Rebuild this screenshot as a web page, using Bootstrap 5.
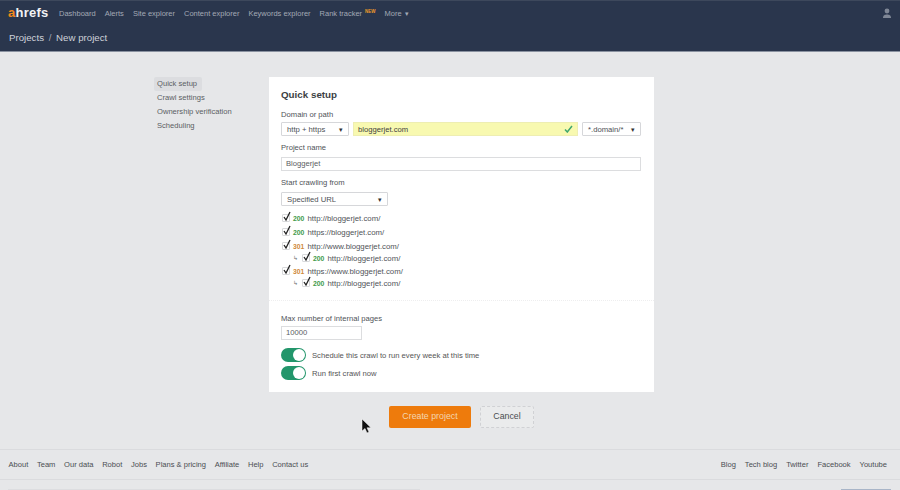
<!DOCTYPE html>
<html lang="en">
<head>
<meta charset="utf-8">
<title>New project</title>
<link rel="stylesheet" href="https://cdn.jsdelivr.net/npm/bootstrap@5.3.0/dist/css/bootstrap.min.css">
<style>
html,body{height:490px;overflow:hidden}
body{background:#e6e7e9;font-family:"Liberation Sans",Arial,sans-serif;font-size:7.65px;line-height:11px;color:#555}
.topbar{height:52px;background:#2a364d;border-top:1px solid #3d485c;border-bottom:1px solid #8a92a0;padding:0 8px 0 9px;color:#aab0bb}
.toprow{height:24px}
.brand{font-size:13px;font-weight:700;letter-spacing:.25px;color:#f2f3f5;width:51px;margin-left:-1px;line-height:22px}
.brand b{color:#f08a1d}
.toplink{color:#a3a9b5;font-size:7.5px;line-height:11px;margin-right:9px;text-decoration:none;white-space:nowrap}
.newtag{color:#ef9a2a;font-size:4.500px;font-weight:700;line-height:0;vertical-align:3px;margin-left:3px}
.caret6{font-size:7px;line-height:0;margin-left:1px}
.crumbs{font-size:9.700px;color:#ced2d9;line-height:14px;margin-top:6px}
.crumbs span{margin:0 2px;color:#a3a9b5}
.mainarea{height:397px;padding:25px 0 0 154px}
.sidemenu{width:115px}
.sideitem{display:block;width:max-content;padding:0 3px;height:14px;line-height:14px;color:#5b5e63;text-decoration:none;font-size:7.6px}
.sideitem.on{background:#dcdde0;border-radius:2px;padding-right:5px}
.panel{width:385px;height:315px;background:#fff;padding:11px 13px 0 12px}
.ptitle{font-size:9.800px;font-weight:700;color:#3c3f44;line-height:14px;margin:0 0 7px}
.lbl{font-size:7.65px;line-height:11px;color:#505358;margin-bottom:2px}
.lbl.wide{margin-bottom:4px}
.pick{height:14px;background:#fff;border:1px solid #d6d7da;border-radius:1px;padding:0 5px;font-size:7.7px;color:#4d5055;flex:none}
.pick i{font-style:normal;font-size:7px;color:#333}
.yellow{flex:1;height:14px;background:#f8f9b0;border:1px solid #eeeeb2;padding:0 4px;color:#3f4040;font-size:7.65px}
.yellow svg{width:9px;height:8px}
.txtfield{height:14px;border:1px solid #dcdddf;padding:0 4px;color:#5a5d62;font-size:7.65px;line-height:12px}
.gap5{margin-bottom:6px}
.gap6{margin-bottom:6px}
.urlrow{height:12px;color:#505358;font-size:7.8px;white-space:nowrap;margin-bottom:2px}
.urlrow.snug0{margin-bottom:0}
.urlrow.snug1{margin-bottom:1px}
.tick{width:8px;height:8px;border:1px solid #d8d9db;border-radius:1px;position:relative;flex:none;margin:0 3px 0 1px}
.tick svg{position:absolute;left:-1px;top:-4px;width:10px;height:11px}
.code{font-size:6.8px;font-weight:700;margin-right:3.500px;width:11px}
.ok{color:#3f9a4b}.moved{color:#d08a3a}
.turn{width:8px;margin-left:12px;font-size:6px;color:#777}
.divide{border-top:1px dotted #eeeeef;margin:11px -13px 12px -12px}
.switchy{width:25px;height:14px;border-radius:7px;background:#23966b;position:relative;flex:none;margin:0 6px 0 0}
.switchy::after{content:"";position:absolute;right:1px;top:1px;width:12px;height:12px;border-radius:50%;background:#fff}
.fieldgap{margin-bottom:8px}
.btnrow{margin:14px 0 0 120px}
.makebtn{width:82px;height:22px;background:#ee7b0c;border:0;border-radius:2px;color:#f4d6b0;font-size:8.800px;padding:0;margin-right:9px}
.quitbtn{width:54px;height:22px;background:#eaebec;border:1px dashed #d0d1d4;border-radius:2px;color:#4b4e52;font-size:8.800px;padding:0}
.footbar{height:31px;border-top:1px solid #dadbde;border-bottom:1px solid #dadbde;padding:0 13px 0 8.500px}
.footbar a{color:#4a4d52;text-decoration:none;font-size:7.55px;margin-right:8.700px}
.footbar .rightlinks a{margin:0 0 0 9px}
.tailrow{height:10px;padding:9px 9px 0 8px}
.tailtext{width:412px;height:1px;background:#dcdde0}
.tailbar{width:50px;height:1px;background:#a8b5c8}
.cursor{position:absolute;left:361px;top:419px;width:10px;height:15px}
</style>
</head>
<body>
<header class="topbar">
  <div class="toprow d-flex align-items-center">
    <div class="brand"><b>a</b>hrefs</div>
    <a class="toplink" href="#">Dashboard</a>
    <a class="toplink" href="#">Alerts</a>
    <a class="toplink" href="#">Site explorer</a>
    <a class="toplink" href="#">Content explorer</a>
    <a class="toplink" href="#">Keywords explorer</a>
    <a class="toplink" href="#">Rank tracker<span class="newtag">NEW</span></a>
    <a class="toplink" href="#">More <span class="caret6">▾</span></a>
    <svg class="ms-auto" width="10" height="11" viewBox="0 0 10 11"><circle cx="5" cy="3" r="2.400" fill="#7f8796"/><path d="M1 10c0-3 2-3.500 4-3.500S9 7 9 10z" fill="#7f8796"/></svg>
  </div>
  <div class="crumbs">Projects<span> / </span>New project</div>
</header>
<main class="mainarea d-flex">
  <nav class="sidemenu">
    <a class="sideitem on" href="#">Quick setup</a>
    <a class="sideitem" href="#">Crawl settings</a>
    <a class="sideitem" href="#">Ownership verification</a>
    <a class="sideitem" href="#">Scheduling</a>
  </nav>
  <div>
    <section class="panel">
      <h1 class="ptitle">Quick setup</h1>
      <div class="lbl">Domain or path</div>
      <div class="d-flex align-items-center gap-1 gap5">
        <div class="pick d-flex align-items-center justify-content-between" style="width:68px">http + https <i>▾</i></div>
        <div class="yellow d-flex align-items-center justify-content-between">bloggerjet.com
          <svg viewBox="0 0 9 8"><path d="M1 4.500 3.300 7 8 1" fill="none" stroke="#3fa66d" stroke-width="1.500"/></svg></div>
        <div class="pick d-flex align-items-center justify-content-between" style="width:59px">*.domain/* <i>▾</i></div>
      </div>
      <div class="lbl wide">Project name</div>
      <div class="txtfield gap6">Bloggerjet</div>
      <div class="lbl wide">Start crawling from</div>
      <div class="pick d-flex align-items-center justify-content-between gap6" style="width:107px">Specified URL <i>▾</i></div>
      <div class="urlrow d-flex align-items-center"><span class="tick"><svg viewBox="0 0 10 11"><path d="M2 6l2 3 4-8" fill="none" stroke="#222" stroke-width="1.300"/></svg></span><span class="code ok">200</span>http://bloggerjet.com/</div>
      <div class="urlrow d-flex align-items-center"><span class="tick"><svg viewBox="0 0 10 11"><path d="M2 6l2 3 4-8" fill="none" stroke="#222" stroke-width="1.300"/></svg></span><span class="code ok">200</span>https://bloggerjet.com/</div>
      <div class="urlrow snug0 d-flex align-items-center"><span class="tick"><svg viewBox="0 0 10 11"><path d="M2 6l2 3 4-8" fill="none" stroke="#222" stroke-width="1.300"/></svg></span><span class="code moved">301</span>http://www.bloggerjet.com/</div>
      <div class="urlrow snug1 d-flex align-items-center"><span class="turn">↳</span><span class="tick"><svg viewBox="0 0 10 11"><path d="M2 6l2 3 4-8" fill="none" stroke="#222" stroke-width="1.300"/></svg></span><span class="code ok">200</span>http://bloggerjet.com/</div>
      <div class="urlrow snug0 d-flex align-items-center"><span class="tick"><svg viewBox="0 0 10 11"><path d="M2 6l2 3 4-8" fill="none" stroke="#222" stroke-width="1.300"/></svg></span><span class="code moved">301</span>https://www.bloggerjet.com/</div>
      <div class="urlrow snug0 d-flex align-items-center"><span class="turn">↳</span><span class="tick"><svg viewBox="0 0 10 11"><path d="M2 6l2 3 4-8" fill="none" stroke="#222" stroke-width="1.300"/></svg></span><span class="code ok">200</span>http://bloggerjet.com/</div>
      <div class="divide"></div>
      <div class="lbl">Max number of internal pages</div>
      <div class="txtfield fieldgap" style="width:81px">10000</div>
      <div class="d-flex align-items-center mb-1"><span class="switchy"></span>Schedule this crawl to run every week at this time</div>
      <div class="d-flex align-items-center"><span class="switchy"></span>Run first crawl now</div>
    </section>
    <div class="btnrow d-flex">
      <button class="btn makebtn" type="button">Create project</button>
      <button class="btn quitbtn" type="button">Cancel</button>
    </div>
  </div>
</main>
<footer class="footbar d-flex align-items-center justify-content-between">
  <div><a href="#">About</a><a href="#">Team</a><a href="#">Our data</a><a href="#">Robot</a><a href="#">Jobs</a><a href="#">Plans &amp; pricing</a><a href="#">Affiliate</a><a href="#">Help</a><a href="#">Contact us</a></div>
  <div class="rightlinks"><a href="#">Blog</a><a href="#">Tech blog</a><a href="#">Twitter</a><a href="#">Facebook</a><a href="#">Youtube</a></div>
</footer>
<div class="tailrow d-flex justify-content-between"><div class="tailtext"></div><div class="tailbar"></div></div>
<svg class="cursor" viewBox="0 0 10 15"><path d="M1 0v12l3-2.500 2 4.500 2-1-2-4.200h4z" fill="#111" stroke="#fff" stroke-width=".5"/></svg>
<script src="https://cdn.jsdelivr.net/npm/bootstrap@5.3.0/dist/js/bootstrap.bundle.min.js"></script>
</body>
</html>
